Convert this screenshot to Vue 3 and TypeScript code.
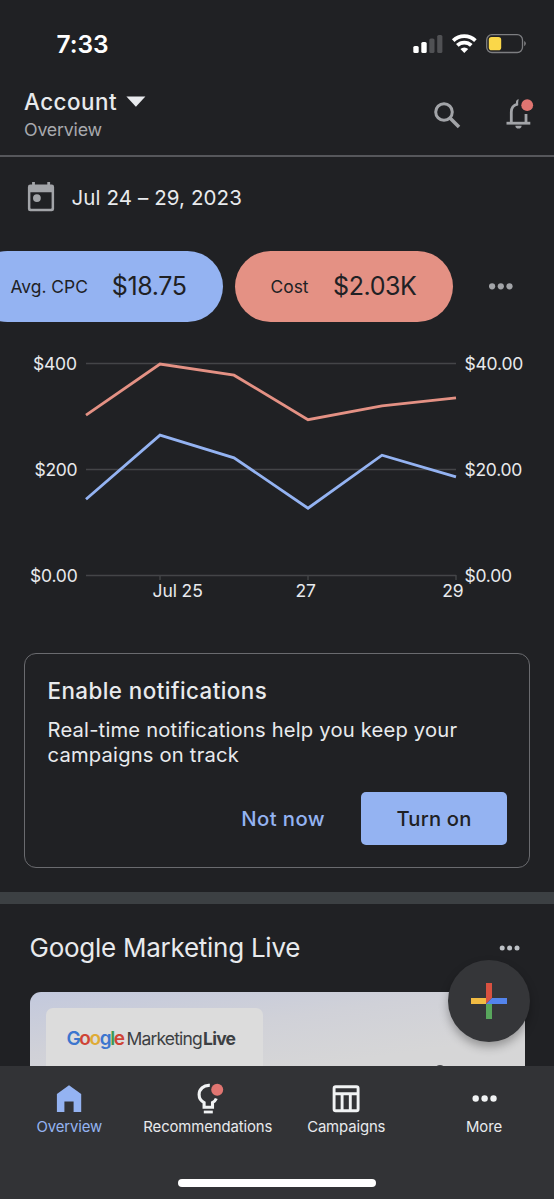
<script setup lang="ts">
interface Series {
  name: string
  max: number
  values: number[]
}

const plot = { left: 86, right: 456, top: 18.5, bottom: 230.5 }

const cpc: Series = { name: 'cpc', max: 40, values: [14.4, 26.5, 22.2, 12.7, 22.7, 18.6] }
const cost: Series = { name: 'cost', max: 400, values: [302.5, 399, 378, 294, 320, 335] }
const series: Series[] = [cost, cpc]

const xAt = (i: number): number => plot.left + (i * (plot.right - plot.left)) / 5
const points = (s: Series): string =>
  s.values
    .map((v, i) => `${xAt(i)},${(plot.bottom - (v / s.max) * (plot.bottom - plot.top)).toFixed(1)}`)
    .join(' ')

const rows = [
  { y: 18.5, left: '$400', lx: 33, lw: 44, right: '$40.00', rw: 59 },
  { y: 124.5, left: '$200', lx: 34.6, lw: 43, right: '$20.00', rw: 58 },
  { y: 230.5, left: '$0.00', lx: 30, lw: 47.7, right: '$0.00', rw: 47.7 },
]
const ticks = [
  { x: 160, label: 'Jul 25', tx: 152.5, w: 50.3 },
  { x: 308, label: '27', tx: 295.6, w: 20.4 },
  { x: 456, label: '29', tx: 442.2, w: 21.4 },
]
</script>

<template>
  <div class="phone">
    <div class="status">
      <span class="clock">7:33</span>
      <svg class="status-icons" width="116" height="24" viewBox="0 0 116 24">
        <rect x="3.3" y="14" width="5.4" height="7" rx="1.6" fill="#fff" />
        <rect x="11.3" y="10" width="5.4" height="11" rx="1.6" fill="#fff" />
        <rect x="19.3" y="6.5" width="5.2" height="14.5" rx="1.6" fill="#505154" />
        <rect x="27.2" y="3" width="5.2" height="18" rx="1.6" fill="#505154" />
        <g fill="none" stroke="#fff" stroke-width="3.7">
          <path d="M43.2 8.7a16 16 0 0 1 22.2 0" />
          <path d="M47.3 13.4a10 10 0 0 1 14 0" />
        </g>
        <path d="M54.3 21l-3.9-3.9a5.6 5.6 0 0 1 7.8 0z" fill="#fff" />
        <rect x="76.7" y="2.7" width="35.8" height="17.8" rx="5.2" fill="none" stroke="#7d7e81" stroke-width="1.3" />
        <rect x="78.8" y="5" width="12.4" height="13.2" rx="2.8" fill="#fad749" />
        <path d="M114.2 9v5.2a2.9 2.9 0 0 0 0-5.2z" fill="#7d7e81" />
      </svg>
    </div>

    <header class="appbar">
      <div class="titles">
        <div class="account">
          <span class="account-name">Account</span>
          <svg width="20" height="11" viewBox="0 0 20 11"><path d="M.4.5h19L9.9 10.8z" fill="#e8eaed" /></svg>
        </div>
        <div class="subtitle">Overview</div>
      </div>
      <svg class="search" width="28" height="28" viewBox="0 0 28 28" fill="none" stroke="#a2a4a8">
        <circle cx="11" cy="11" r="8.3" stroke-width="3" />
        <path d="M17 17l9 9" stroke-width="3.5" />
      </svg>
      <svg class="bell" width="30" height="34" viewBox="0 0 30 34">
        <g fill="none" stroke="#a2a4a8" stroke-width="2.8">
          <path d="M2.5 26.2h23.8" />
          <path d="M7.3 26V15c0-4.2 2.6-7 6.4-8" />
          <path d="M22 26v-9" />
        </g>
        <path d="M12 5.2c0-1.6 1-2.7 2.8-2.9-.6 1.7-.8 4-.5 5.900l-2.300.4z" fill="#a2a4a8" />
        <path d="M11.4 28.700h6.200a3.100 2.800 0 0 1-6.200 0z" fill="#a2a4a8" />
        <circle cx="23.2" cy="8.2" r="5.9" fill="#e07571" />
      </svg>
    </header>

    <div class="date-row">
      <svg width="28" height="31" viewBox="0 0 28 31">
        <path d="M5.1 1h2.8v3H5.1zM20.3 1h2.8v3h-2.8z" fill="#a2a4a8" />
        <path d="M3.3 3.5h21.4a2.4 2.4 0 0 1 2.4 2.4v22a2.4 2.4 0 0 1-2.4 2.4H3.3a2.4 2.4 0 0 1-2.4-2.4v-22a2.4 2.4 0 0 1 2.4-2.4zM3.4 11.3v15.5c0 .6.4 1 1 1h19.2c.6 0 1-.4 1-1V11.3z" fill="#a2a4a8" fill-rule="evenodd" />
        <circle cx="9.9" cy="17.1" r="3.9" fill="#a2a4a8" />
      </svg>
      <span class="date">Jul 24 – 29, 2023</span>
    </div>

    <div class="chips">
      <div class="chip chip-cpc">
        <span class="chip-label">Avg. CPC</span>
        <span class="chip-value">$18.75</span>
      </div>
      <div class="chip chip-cost">
        <span class="chip-label">Cost</span>
        <span class="chip-value">$2.03K</span>
      </div>
      <svg class="chip-more" width="26" height="8" viewBox="0 0 26 8" fill="#a2a4a8">
        <circle cx="4.1" cy="4.3" r="3.1" /><circle cx="12.8" cy="4.3" r="3.1" /><circle cx="21.5" cy="4.3" r="3.1" />
      </svg>
    </div>

    <svg class="chart" width="554" height="265" viewBox="0 0 554 265">
      <g v-for="r in rows" :key="r.y">
        <line :x1="plot.left" :x2="plot.right" :y1="r.y" :y2="r.y" class="grid" />
        <text :x="r.lx" :y="r.y + 6" :textLength="r.lw">{{ r.left }}</text>
        <text x="464.4" :y="r.y + 6" :textLength="r.rw">{{ r.right }}</text>
      </g>
      <g v-for="t in ticks" :key="t.x">
        <line :x1="t.x" :x2="t.x" y1="230" y2="235" class="grid" />
        <text :x="t.tx" y="252" :textLength="t.w">{{ t.label }}</text>
      </g>
      <polyline v-for="s in series" :key="s.name" :points="points(s)" :class="['line', s.name]" />
    </svg>

    <section class="card">
      <h2>Enable notifications</h2>
      <p>Real-time notifications help you keep your<br />campaigns on track</p>
      <div class="actions">
        <button class="text-btn">Not now</button>
        <button class="fill-btn">Turn on</button>
      </div>
    </section>

    <div class="divider"></div>

    <section class="live">
      <div class="live-head">
        <h1>Google Marketing Live</h1>
        <svg width="22" height="8" viewBox="0 0 22 8" fill="#bdc1c6">
          <circle cx="3.2" cy="4" r="2.5" /><circle cx="10.6" cy="4" r="2.5" /><circle cx="18" cy="4" r="2.5" />
        </svg>
      </div>
      <div class="banner">
        <div class="logo-panel">
          <span class="g-logo"><i class="b">G</i><i class="r">o</i><i class="y">o</i><i class="b">g</i><i class="g">l</i><i class="r">e</i></span>
          <span class="g-marketing">Marketing</span>
          <span class="g-live">Live</span>
        </div>
        <div class="figure"></div>
      </div>
    </section>

    <button class="fab" aria-label="Create">
      <svg width="36" height="36" viewBox="0 0 36 36">
        <path d="M15 0h6v15l-6 6z" fill="#d85140" />
        <path d="M0 15h15v6H0z" fill="#f1bb43" />
        <path d="M15 21h6v15h-6z" fill="#58a65c" />
        <path d="M21 15h15v6H15z" fill="#5384ec" />
      </svg>
    </button>

    <nav class="tabs">
      <div class="tab active">
        <svg width="32" height="32" viewBox="0 0 32 32"><path d="M16 3.3l12.2 8.6v18.2h-7.6V19.4h-9.2v10.7H3.9V11.9z" fill="#94b3f2" /></svg>
        <span>Overview</span>
      </div>
      <div class="tab">
        <svg width="32" height="32" viewBox="0 0 32 32">
          <path d="M17.8 3.4c-6-.5-10.700 3.600-10.700 9.200 0 3.700 2 6.500 5 8v4.600h8.400v-4.600c1.900-.9 3-2.200 3.800-4.100" fill="none" stroke="#f1f3f4" stroke-width="3.1" />
          <path d="M11.8 30h9" stroke="#f1f3f4" stroke-width="2.8" />
          <circle cx="25.2" cy="7.8" r="6" fill="#e07571" />
        </svg>
        <span>Recommendations</span>
      </div>
      <div class="tab">
        <svg width="32" height="32" viewBox="0 0 32 32" fill="none" stroke="#f1f3f4" stroke-width="2.9">
          <rect x="4.1" y="4.8" width="24" height="24" rx="1.6" />
          <path d="M4 11.7h24M12.1 11.7v17M20.3 11.7v17" />
        </svg>
        <span>Campaigns</span>
      </div>
      <div class="tab">
        <svg width="32" height="32" viewBox="0 0 32 32" fill="#f1f3f4">
          <circle cx="6.7" cy="16.5" r="3.2" /><circle cx="15.6" cy="16.5" r="3.2" /><circle cx="24.5" cy="16.5" r="3.2" />
        </svg>
        <span class="more-label">More</span>
      </div>
    </nav>
    <div class="home-area"><div class="home-bar"></div></div>
  </div>
</template>

<style>
body {
  margin: 0;
  background: #202124;
}
</style>

<style scoped>
.phone {
  position: relative;
  display: flex;
  flex-direction: column;
  width: 554px;
  height: 1199px;
  overflow: hidden;
  background: #202124;
  color: #e8eaed;
  font-family: Inter, "Liberation Sans", sans-serif;
}
.phone > * {
  flex: none;
  box-sizing: border-box;
}
svg {
  display: block;
  flex: none;
}
h1,
h2,
p {
  margin: 0;
}
button {
  border: 0;
  padding: 0;
  font-family: inherit;
}
.status {
  display: flex;
  justify-content: space-between;
  height: 88px;
  padding: 32px 28px 0 56.5px;
}
.clock {
  font-size: 24.5px;
  font-weight: 600;
  line-height: 24px;
  letter-spacing: -0.1px;
  color: #fff;
}
.appbar {
  display: flex;
  height: 69px;
  padding-left: 24px;
  border-bottom: 2px solid #56575b;
}
.titles {
  width: 409px;
}
.account {
  display: flex;
  align-items: center;
  gap: 9px;
  height: 26px;
}
.account-name {
  font-size: 22.4px;
  font-weight: 500;
  letter-spacing: 0.5px;
}
.subtitle {
  font-size: 17.8px;
  line-height: 31px;
  letter-spacing: -0.2px;
  color: #a8aaae;
}
.search {
  margin-top: 12.5px;
}
.bell {
  margin: 9px 0 0 43px;
}
.date-row {
  display: flex;
  align-items: center;
  gap: 16.5px;
  height: 82px;
  padding-left: 27px;
}
.date-row svg {
  margin-bottom: 3px;
}
.date {
  margin-bottom: 2px;
  font-size: 20.5px;
  letter-spacing: 0.1px;
}
.chips {
  display: flex;
  align-items: center;
  gap: 12px;
  height: 95px;
  padding-bottom: 1px;
}
.chip {
  display: flex;
  align-items: center;
  box-sizing: border-box;
  height: 71px;
  border-radius: 36px;
  color: #202124;
}
.chip-cpc {
  width: 251px;
  margin-left: -28px;
  padding-left: 38.5px;
  gap: 24px;
  background: #94b3f2;
}
.chip-cost {
  width: 218px;
  padding-left: 35.5px;
  gap: 24.5px;
  background: #e49184;
}
.chip-label {
  font-size: 17.4px;
}
.chip-value {
  font-size: 25px;
  letter-spacing: -0.4px;
}
.chip-more {
  margin-left: 23px;
}
.chart {
  margin-top: 11px;
}
.chart text {
  font-size: 17.5px;
  fill: #e8eaed;
}
.grid {
  stroke: #444548;
  stroke-width: 1.4;
}
.line {
  fill: none;
  stroke-width: 2.8;
}
.cost {
  stroke: #e49184;
}
.cpc {
  stroke: #94b3f2;
}
.card {
  width: 506px;
  height: 215px;
  margin: 43px 0 24px 24px;
  padding: 21px 22px 0 22.5px;
  border: 1px solid #6a6b6f;
  border-radius: 12px;
}
h2 {
  font-size: 22.4px;
  font-weight: 500;
  line-height: 31px;
  letter-spacing: 0.44px;
}
.card p {
  margin-top: 11px;
  font-size: 20.2px;
  line-height: 25px;
  letter-spacing: 0.19px;
  white-space: nowrap;
}
.actions {
  display: flex;
  justify-content: flex-end;
  align-items: center;
  gap: 36px;
  margin-top: 25px;
}
.text-btn {
  background: none;
  color: #94b3f2;
  font-size: 20.3px;
  font-weight: 500;
  letter-spacing: 0.4px;
}
.fill-btn {
  width: 146px;
  height: 53px;
  border-radius: 5px;
  background: #94b3f2;
  color: #202124;
  font-size: 20.2px;
  font-weight: 500;
  letter-spacing: 0.2px;
}
.divider {
  height: 12px;
  background: #3c4043;
}
.live {
  height: 162px;
  overflow: hidden;
  padding: 0 29.5px 0 30px;
}
.live-head {
  display: flex;
  align-items: center;
  justify-content: space-between;
  height: 88px;
  padding-right: 4px;
}
h1 {
  margin: -1px 0 0 -0.5px;
  font-size: 26px;
  font-weight: 400;
  letter-spacing: -0.26px;
}
.banner {
  position: relative;
  box-sizing: border-box;
  height: 120px;
  padding: 16px 0 0 16px;
  border-radius: 11px 0 0 0;
  background: linear-gradient(172deg, #c3c9dd 0%, #d0d1d8 32%, #d6d6d7 60%, #d6d6d6 100%);
}
.logo-panel {
  display: flex;
  align-items: center;
  box-sizing: border-box;
  width: 217px;
  height: 110px;
  padding: 0 0 48px 20.5px;
  border-radius: 7px;
  background: #dcdcdc;
  line-height: 24px;
  white-space: nowrap;
  color: #3c4043;
}
.logo-panel i {
  font-style: normal;
}
.g-logo {
  width: 60px;
  font-size: 19px;
  font-weight: 600;
  letter-spacing: -1.4px;
}
.g-marketing {
  width: 76.5px;
  font-size: 17.5px;
  letter-spacing: -0.85px;
}
.g-live {
  font-size: 17.5px;
  font-weight: 700;
  letter-spacing: -0.75px;
}
.b { color: #3b76cf; }
.r { color: #cf4436; }
.y { color: #dfab35; }
.g { color: #3c9a53; }
.figure {
  position: absolute;
  left: 405px;
  top: 73px;
  width: 10px;
  height: 8px;
  border-radius: 50%;
  background: #444548;
}
.fab {
  position: absolute;
  left: 447.5px;
  top: 959.5px;
  display: flex;
  align-items: center;
  justify-content: center;
  width: 82.5px;
  height: 82.5px;
  border-radius: 50%;
  background: #353639;
  box-shadow: 0 5px 10px rgba(0, 0, 0, 0.3);
}
.tabs {
  display: flex;
  height: 74px;
  background: #323336;
}
.tab {
  display: flex;
  flex: 1;
  flex-direction: column;
  align-items: center;
  padding-top: 16px;
  font-size: 14.9px;
  letter-spacing: -0.12px;
}
.tab span {
  line-height: 26px;
}
.more-label {
  margin-right: 1.5px;
}
.active {
  color: #94b3f2;
}
.home-area {
  display: flex;
  justify-content: center;
  height: 59px;
  padding-top: 39px;
  background: #323336;
}
.home-bar {
  width: 198px;
  height: 8px;
  border-radius: 4px;
  background: #fff;
}
</style>
